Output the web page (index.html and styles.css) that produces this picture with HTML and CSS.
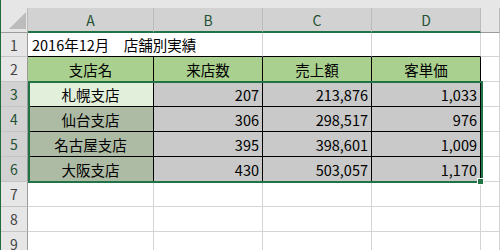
FILE: index.html
```html
<!DOCTYPE html>
<html lang="ja">
<head>
<meta charset="utf-8">
<link rel="stylesheet" href="styles.css">
</head>
<body>
<div class="sheet">
  <div class="strip"></div>
  <div class="grid">
    <div class="corner"><svg width="17" height="17" viewBox="0 0 17 17"><polygon points="17,0 17,17 0,17" fill="#bcbcbc"/></svg></div>
    <div class="ch sel">A</div>
    <div class="ch sel">B</div>
    <div class="ch sel">C</div>
    <div class="ch sel">D</div>
    <div class="ch"></div>

    <div class="rh">1</div>
    <div class="c title tb nor">2016年12月　店舗別実績</div>
    <div class="c tb"></div>
    <div class="c tb"></div>
    <div class="c tb"></div>
    <div class="c"></div>

    <div class="rh">2</div>
    <div class="c d hd">支店名</div>
    <div class="c d hd">来店数</div>
    <div class="c d hd">売上額</div>
    <div class="c d hd">客単価</div>
    <div class="c"></div>

    <div class="rh rsel">3</div>
    <div class="c d ctr active">札幌支店</div>
    <div class="c d num gs">207</div>
    <div class="c d num gs">213,876</div>
    <div class="c d num gs">1,033</div>
    <div class="c"></div>

    <div class="rh rsel">4</div>
    <div class="c d ctr greens">仙台支店</div>
    <div class="c d num gs">306</div>
    <div class="c d num gs">298,517</div>
    <div class="c d num gs">976</div>
    <div class="c"></div>

    <div class="rh rsel">5</div>
    <div class="c d ctr greens">名古屋支店</div>
    <div class="c d num gs">395</div>
    <div class="c d num gs">398,601</div>
    <div class="c d num gs">1,009</div>
    <div class="c"></div>

    <div class="rh rsel">6</div>
    <div class="c d ctr greens">大阪支店</div>
    <div class="c d num gs">430</div>
    <div class="c d num gs">503,057</div>
    <div class="c d num gs">1,170</div>
    <div class="c"></div>

    <div class="rh">7</div>
    <div class="c"></div><div class="c"></div><div class="c"></div><div class="c"></div><div class="c"></div>
    <div class="rh">8</div>
    <div class="c"></div><div class="c"></div><div class="c"></div><div class="c"></div><div class="c"></div>
    <div class="rh">9</div>
    <div class="c"></div><div class="c"></div><div class="c"></div><div class="c"></div><div class="c"></div>
  </div>
  <div class="selection"><div class="handle"></div></div>
</div>
</body>
</html>
```
FILE: styles.css
```css
html, body {
  margin: 0;
  padding: 0;
  background: #ffffff;
  overflow: hidden;
}
.sheet {
  position: relative;
  width: 500px;
  height: 250px;
  overflow: hidden;
  box-sizing: border-box;
  border-left: 1px solid #1e6b3c;
  font-family: "Noto Sans CJK JP", "Noto Sans", sans-serif;
  color: #000;
}
.strip {
  height: 8px;
  background: #e6e6e6;
}
.grid {
  display: grid;
  grid-template-columns: 27px 126px 109px 109px 109px 1fr;
  grid-template-rows: 25px 24px repeat(8, 25px);
}
.grid > div {
  box-sizing: border-box;
  display: flex;
  align-items: center;
  white-space: nowrap;
  min-width: 0;
}
.corner {
  background: #e6e6e6;
  border-right: 1px solid #bcbcbc;
  border-bottom: 1px solid #9b9b9b;
  justify-content: flex-end;
  align-items: flex-end !important;
  padding: 0 1px 3px 0;
}
.ch {
  background: #e6e6e6;
  border-right: 1px solid #bcbcbc;
  border-bottom: 1px solid #9b9b9b;
  justify-content: center;
  font-size: 14px;
  color: #444;
  padding-bottom: 1px;
}
.ch.sel {
  background: #d2d2d2;
  border-bottom: 2px solid #217346;
  color: #1f5134;
  padding-bottom: 0;
}
.rh {
  background: #e6e6e6;
  border-right: 1px solid #9b9b9b;
  border-bottom: 1px solid #c4c4c4;
  justify-content: center;
  font-size: 14px;
  color: #444;
}
.rh.rsel {
  background: #d2d2d2;
  color: #1f5134;
}
.c {
  border-right: 1px solid #d4d4d4;
  border-bottom: 1px solid #d4d4d4;
  font-size: 14.5px;
  padding: 0 3px;
  overflow: visible;
}
.c.title {
  padding-left: 4px;
  position: relative;
  z-index: 1;
}
.c.nor {
  border-right: none;
}
.c.tb {
  border-bottom: 1px solid #000;
}
.c.d {
  border-right: 1px solid #000;
  border-bottom: 1px solid #000;
}
.hd {
  background: #a9d08e;
  justify-content: center;
}
.ctr {
  justify-content: center;
}
.num {
  justify-content: flex-end;
}
.active {
  background: #e2efda;
}
.greens {
  background: #adbaa4;
}
.gs {
  background: #c9c9c9;
}
.selection {
  position: absolute;
  left: 27px;
  top: 81px;
  width: 455px;
  height: 102px;
  box-sizing: border-box;
  border: 2px solid #217346;
  pointer-events: none;
}
.handle {
  position: absolute;
  left: 447px;
  top: 95px;
  width: 5px;
  height: 5px;
  background: #217346;
  border: 1px solid #ffffff;
}
```
